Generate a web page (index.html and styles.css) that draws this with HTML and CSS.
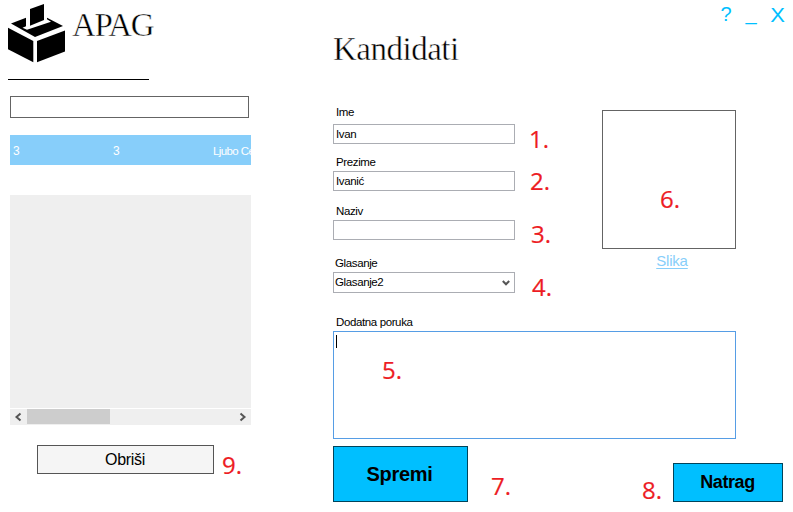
FILE: index.html
```html
<!DOCTYPE html>
<html lang="hr">
<head>
<meta charset="utf-8">
<title>APAG</title>
<link rel="stylesheet" href="styles.css">
</head>
<body>
<div class="window">
  <aside class="sidebar">
    <div class="brand">
      <svg class="logo" width="58" height="60" viewBox="0 0 58 60">
        <path d="M3 19.5L18 13.7L39 13.7L55 22L27 33Z"/>
        <path d="M18 12V22.3L14.5 23.8L19 25.8L43 17.8L39 15.2V12Z" fill="#fff"/>
        <path d="M22 5L36 0V16L22 21.7Z"/>
        <path d="M0 23.7L25.3 37V58.3L0 45.3Z"/>
        <path d="M57 26.5L29 37V58.3L57 47.5Z"/>
      </svg>
      <span class="brand-name">APAG</span>
    </div>
    <div class="rule"></div>
    <input class="search" type="text">
    <div class="grid">
      <div class="grid-row"><span>3</span><span>3</span><span class="name">Ljubo Ce</span></div>
      <div class="grid-empty"></div>
      <div class="scrollbar">
        <svg width="17" height="16" viewBox="0 0 17 16"><path d="M10.5 4.5L6.5 8L10.5 11.5"/></svg>
        <div class="thumb"></div>
        <svg class="right" width="17" height="16" viewBox="0 0 17 16"><path d="M6.5 4.5L10.5 8L6.5 11.5"/></svg>
      </div>
    </div>
    <div class="delete-row">
      <button class="delete">Obriši</button>
      <span class="mark m9">9.</span>
    </div>
  </aside>
  <main class="main">
    <h1>Kandidati</h1>
    <nav class="controls"><span class="help">?</span><span class="min">_</span><span class="close">X</span></nav>
    <div class="top">
      <div class="fields">
        <div class="field ime"><label>Ime</label><div class="box">Ivan</div><span class="mark m1">1.</span></div>
        <div class="field prezime"><label>Prezime</label><div class="box">Ivanić</div><span class="mark m2">2.</span></div>
        <div class="field naziv"><label>Naziv</label><div class="box"></div><span class="mark m3">3.</span></div>
        <div class="field glasanje"><label>Glasanje</label>
          <div class="box select"><span>Glasanje2</span><svg width="8" height="6" viewBox="0 0 8 6"><path d="M.8 1L4 4.3L7.2 1"/></svg></div>
          <span class="mark m4">4.</span></div>
      </div>
      <div class="photo">
        <div class="frame"><span class="mark m6">6.</span></div>
        <a class="link">Slika</a>
      </div>
    </div>
    <div class="field message"><label>Dodatna poruka</label>
      <div class="area"><i class="caret"></i><span class="mark m5">5.</span></div></div>
    <div class="actions">
      <button class="primary save">Spremi</button>
      <span class="mark m7">7.</span>
      <span class="mark m8">8.</span>
      <button class="primary back">Natrag</button>
    </div>
  </main>
</div>
</body>
</html>
```
FILE: styles.css
```css
* { box-sizing: border-box; }
body { margin: 0; background: #fff; color: #000; font-family: "Liberation Sans", Arial, sans-serif; }
button { padding: 0; border-radius: 0; font-family: inherit; color: #000; }
.window { width: 793px; height: 512px; display: flex; overflow: hidden; }
.sidebar { width: 333px; padding: 4px 0 0 8px; }
.brand { display: flex; gap: 6px; height: 75px; }
.logo { flex: none; }
.brand-name, h1 { font: 33px/40px "Liberation Serif", serif; -webkit-text-stroke: .45px #fff; }
.brand-name { padding-top: 1px; letter-spacing: -1.4px; }
.rule { width: 141px; height: 1px; background: #000; }
.search { display: block; width: 239px; height: 22px; margin: 16px 0 0 2px; border: 1px solid #646464; border-radius: 0; outline: 0; }
.grid { width: 241px; margin: 17px 0 0 2px; }
.grid-row { display: flex; height: 30px; overflow: hidden; background: #87cefa; color: #fff; font-size: 12px; line-height: 32px; letter-spacing: -.4px; white-space: nowrap; }
.grid-row span { flex: 0 0 100px; padding-left: 3px; }
.grid-row .name { font-size: 11.5px; letter-spacing: -.6px; }
.grid-empty { height: 213px; margin-top: 30px; background: #efefef; }
.scrollbar { display: flex; height: 16px; margin-top: 1px; background: #efefef; }
.scrollbar svg, .select svg { fill: none; stroke: #555; stroke-width: 2; }
.thumb { width: 83px; height: 15px; background: #cdcdcd; }
.right { margin-left: auto; }
.delete-row { position: relative; margin: 20px 0 0 29px; }
.delete { display: block; width: 177px; height: 29px; padding-right: 1px; border: 1px solid #555; background: #f5f5f5; font-size: 16px; letter-spacing: -.3px; }
.main { position: relative; width: 460px; padding-top: 29px; }
h1 { margin: 0; font-weight: 400; letter-spacing: -.5px; }
.controls { position: absolute; top: 0; right: 9px; display: flex; gap: 14px; color: #00bfff; font-size: 20px; line-height: 28px; }
.min { transform: translateY(-1px); }
.close { transform: translateY(1px) scaleX(1.1); }
.top { display: flex; padding-top: 37px; }
.fields { width: 269px; }
.field { position: relative; }
label { display: block; height: 18px; padding-left: 3px; font-size: 11.5px; line-height: 18px; letter-spacing: -.38px; }
.ime label { line-height: 12px; }
.box { width: 182px; height: 20px; padding-left: 2px; border: 1px solid #abadb3; font-size: 11.5px; line-height: 18px; letter-spacing: -.38px; }
.prezime { margin-top: 9px; }
.naziv { margin-top: 11px; }
.glasanje { margin-top: 14px; }
.glasanje label { padding-left: 2px; }
.select { display: flex; justify-content: space-between; align-items: center; height: 21px; padding: 0 4px 0 1px; }
.select span { padding-bottom: 1px; }
.photo { width: 134px; padding-top: 4px; text-align: center; }
.frame { position: relative; height: 139px; border: 1px solid #646464; }
.link { display: block; width: 32px; height: 20px; margin: 2px 0 0 54px; color: #87cefa; font-size: 15px; line-height: 19px; letter-spacing: -.2px; text-decoration: underline; text-underline-offset: 2px; white-space: nowrap; }
.message { margin-top: 20px; }
.area { width: 403px; height: 108px; padding: 3px 2px; border: 1px solid #569de5; }
.caret { display: block; width: 1px; height: 13px; background: #000; }
.actions { position: relative; display: flex; justify-content: space-between; align-items: flex-end; width: 450px; height: 56px; margin-top: 7px; }
.primary { border: 1px solid #00445b; background: #00bfff; font-weight: 700; }
.save { width: 135px; height: 56px; padding-right: 2px; font-size: 20px; letter-spacing: -.3px; }
.back { width: 110px; height: 39px; padding-right: 1px; font-size: 18px; letter-spacing: -.4px; }
.mark { position: absolute; color: #ed1c24; font: 24px/24px "Open Sans", sans-serif; -webkit-text-stroke: .2px #ed1c24; }
.m1 { left: 196px; top: 21px; }
.m2 { left: 197px; top: 16px; }
.m3 { left: 198px; top: 20px; }
.m4 { left: 199px; top: 21px; }
.m5 { left: 49px; top: 45px; }
.m6 { left: 57px; top: 76px; }
.m7 { left: 158px; top: 28px; }
.m8 { left: 309px; top: 32px; }
.m9 { left: 185px; top: 8px; }
```
